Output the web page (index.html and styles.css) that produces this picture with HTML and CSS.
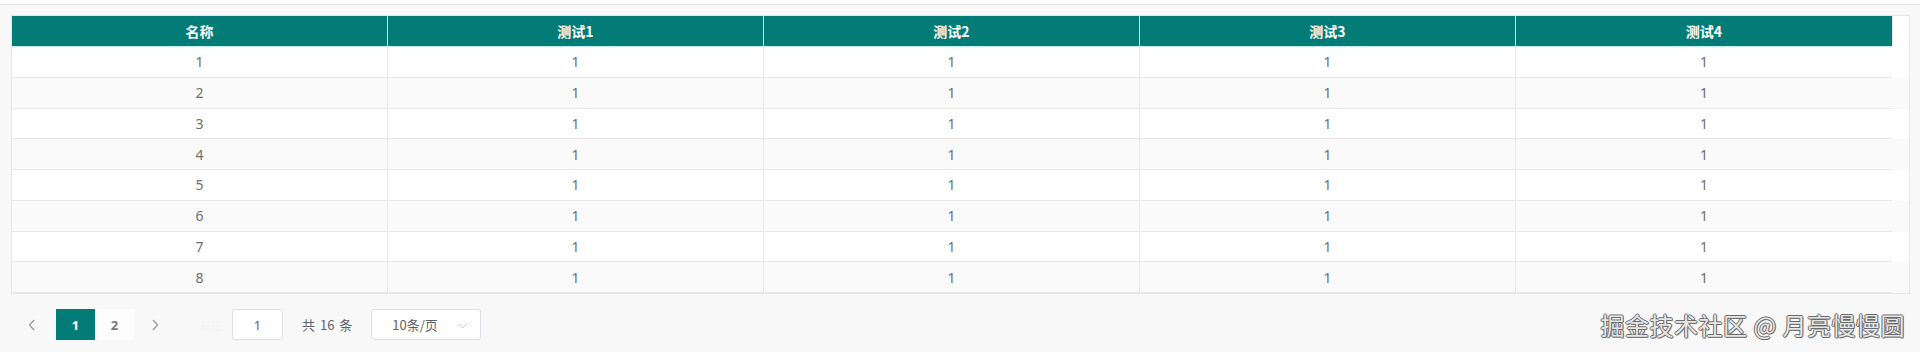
FILE: index.html
```html
<!DOCTYPE html>
<html lang="zh">
<head>
<meta charset="utf-8">
<link rel="stylesheet" href="styles.css">
</head>
<body>
<div class="page">
  <div class="topbar"></div>
  <div class="table-wrap">
    <div class="thead">
      <div class="th">名称</div>
      <div class="th">测试1</div>
      <div class="th">测试2</div>
      <div class="th">测试3</div>
      <div class="th">测试4</div>
      <div class="gutter"></div>
    </div>
    <div class="tbody">
      <div class="tr"><div class="td">1</div><div class="td">1</div><div class="td">1</div><div class="td">1</div><div class="td">1</div></div>
      <div class="tr stripe"><div class="td">2</div><div class="td">1</div><div class="td">1</div><div class="td">1</div><div class="td">1</div></div>
      <div class="tr"><div class="td">3</div><div class="td">1</div><div class="td">1</div><div class="td">1</div><div class="td">1</div></div>
      <div class="tr stripe"><div class="td">4</div><div class="td">1</div><div class="td">1</div><div class="td">1</div><div class="td">1</div></div>
      <div class="tr"><div class="td">5</div><div class="td">1</div><div class="td">1</div><div class="td">1</div><div class="td">1</div></div>
      <div class="tr stripe"><div class="td">6</div><div class="td">1</div><div class="td">1</div><div class="td">1</div><div class="td">1</div></div>
      <div class="tr"><div class="td">7</div><div class="td">1</div><div class="td">1</div><div class="td">1</div><div class="td">1</div></div>
      <div class="tr stripe"><div class="td">8</div><div class="td">1</div><div class="td">1</div><div class="td">1</div><div class="td">1</div></div>
      <div class="tr"><div class="td">9</div><div class="td">1</div><div class="td">1</div><div class="td">1</div><div class="td">1</div></div>
      <div class="tr stripe"><div class="td">10</div><div class="td">1</div><div class="td">1</div><div class="td">1</div><div class="td">1</div></div>
    </div>
  </div>
  <div class="footer">
    <div class="pager">
      <span class="btn arrow"><svg width="8" height="12" viewBox="0 0 8 12"><path d="M6 1 L1.5 6 L6 11" fill="none" stroke="#9a9a9a" stroke-width="1.3"/></svg></span>
      <span class="num active">1</span>
      <span class="num">2</span>
      <span class="btn arrow next"><svg width="8" height="12" viewBox="0 0 8 12"><path d="M2 1 L6.5 6 L2 11" fill="none" stroke="#9a9a9a" stroke-width="1.3"/></svg></span>
      <span class="jump">前往</span>
      <span class="input">1</span>
      <span class="total">共 16 条</span>
      <span class="select">10条/页<svg class="chev" width="10" height="6" viewBox="0 0 10 6"><path d="M1 1 L5 5 L9 1" fill="none" stroke="#c8cbd0" stroke-width="1"/></svg></span>
    </div>
    <div class="watermark">掘金技术社区 @ 月亮慢慢圆</div>
  </div>
</div>
</body>
</html>
```

FILE: styles.css
```css
html, body {
  margin: 0;
  padding: 0;
}
body {
  background: #f8f8f9;
  font-family: "Microsoft YaHei", "Noto Sans CJK SC", "Noto Sans", sans-serif;
  color: #606266;
  width: 1920px;
  height: 352px;
  overflow: hidden;
}
.page {
  display: flex;
  flex-direction: column;
}
.topbar {
  height: 4px;
  background: #ffffff;
  border-bottom: 1px solid #e3e3e6;
}
.table-wrap {
  margin: 10px 0 0 11px;
  width: 1897px;
  border: 1px solid #e6e6e9;
  background: #ffffff;
}
.thead {
  display: grid;
  grid-template-columns: repeat(5, 376px) 17px;
  height: 31px;
}
.th {
  background: #037c77;
  color: #ffffff;
  font-weight: bold;
  font-size: 14px;
  display: flex;
  align-items: center;
  justify-content: center;
  border-right: 1px solid #bfe9e7;
  border-bottom: 1px solid #bff0ee;
  box-sizing: border-box;
}
.th:nth-child(5) {
  border-right: none;
}
.gutter {
  background: #ffffff;
  border-left: 1px solid #e6e6e9;
}
.tbody {
  height: 246px;
  overflow-y: scroll;
}
.tbody::-webkit-scrollbar {
  width: 17px;
}
.tbody::-webkit-scrollbar-track {
  background: #f1f1f1;
}
.tbody::-webkit-scrollbar-thumb {
  background: #c4c4c4;
  border-radius: 8px;
  border: 1px solid #f1f1f1;
}
.tr {
  display: grid;
  grid-template-columns: repeat(5, 376px);
  height: 30.75px;
  background: #ffffff;
}
.tr.stripe {
  background: #fafafa;
}
.td {
  display: flex;
  align-items: center;
  justify-content: center;
  font-family: "Noto Sans", "Noto Sans CJK SC", sans-serif;
  font-size: 14px;
  color: #6e6e6e;
  border-right: 1px solid #e8e8e8;
  border-bottom: 1px solid #e8e8e8;
  box-sizing: border-box;
}
.td:last-child {
  border-right: none;
}
.footer {
  display: flex;
  justify-content: space-between;
  align-items: center;
  padding: 13px 15px 0 17px;
}
.pager {
  display: flex;
  align-items: center;
  font-size: 13px;
  height: 31px;
}
.btn {
  width: 30px;
  height: 31px;
  display: flex;
  align-items: center;
  justify-content: center;
}
.arrow {
  margin-right: 9px;
}
.arrow.next {
  margin-left: 6px;
  margin-right: 0;
}
.num {
  width: 39px;
  height: 31px;
  display: flex;
  align-items: center;
  justify-content: center;
  font-family: "Noto Sans", "Noto Sans CJK SC", sans-serif;
  font-weight: bold;
  color: #777777;
  background: #fdfdfd;
}
.num.active {
  background: #037c77;
  color: #ffffff;
}
.jump {
  margin-left: 30px;
  font-size: 11px;
  color: #f3f3f3;
  width: 22px;
}
.input {
  margin-left: 10px;
  width: 51px;
  height: 31px;
  box-sizing: border-box;
  border: 1px solid #dcdfe6;
  border-radius: 3px;
  background: #ffffff;
  display: flex;
  align-items: center;
  justify-content: center;
  font-family: "Noto Sans", "Noto Sans CJK SC", sans-serif;
  color: #606266;
}
.total {
  margin-left: 19px;
  word-spacing: 2px;
  color: #606266;
}
.select {
  margin-left: 19px;
  width: 110px;
  height: 31px;
  box-sizing: border-box;
  border: 1px solid #dcdfe6;
  border-radius: 3px;
  background: #ffffff;
  display: flex;
  align-items: center;
  padding-left: 20px;
  color: #606266;
  position: relative;
}
.chev {
  position: absolute;
  right: 12px;
  top: 13px;
}
.watermark {
  font-size: 24px;
  color: #e6e6e6;
  letter-spacing: 0.5px;
  text-shadow: -1px 0 #6a6a6a, 1px 0 #6a6a6a, 0 -1px #6a6a6a, 0 1px #6a6a6a, 1px 1px #999;
}
```
